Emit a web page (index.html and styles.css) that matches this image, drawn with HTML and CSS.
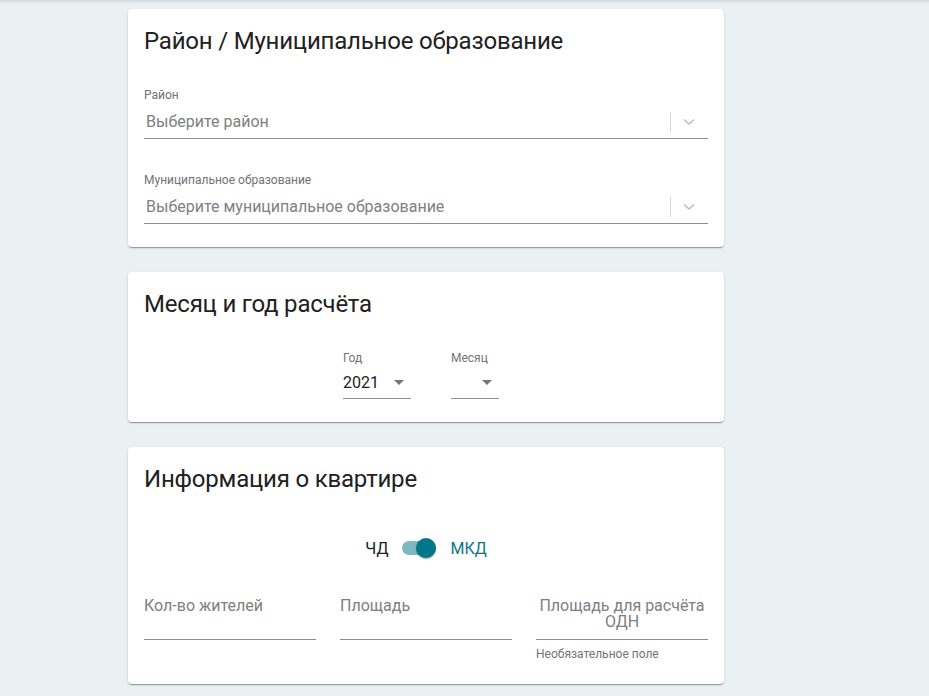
FILE: index.html
```html
<!DOCTYPE html>
<html lang="ru">
<head>
<meta charset="utf-8">
<link rel="stylesheet" href="styles.css">
</head>
<body>
<div class="topshade"></div>
<main class="page">
  <section class="card">
    <h2 class="card-title">Район / Муниципальное образование</h2>
    <div class="sel-field first">
      <div class="sel-label">Район</div>
      <div class="sel-box">
        <span class="sel-placeholder">Выберите район</span>
        <span class="sel-sep"></span>
        <svg class="sel-chev" viewBox="0 0 12 8" width="12" height="8"><path d="M1 1.5 L6 6 L11 1.5" fill="none" stroke="#bdbdbd" stroke-width="1.6"/></svg>
      </div>
    </div>
    <div class="sel-field second">
      <div class="sel-label">Муниципальное образование</div>
      <div class="sel-box">
        <span class="sel-placeholder">Выберите муниципальное образование</span>
        <span class="sel-sep"></span>
        <svg class="sel-chev" viewBox="0 0 12 8" width="12" height="8"><path d="M1 1.5 L6 6 L11 1.5" fill="none" stroke="#bdbdbd" stroke-width="1.6"/></svg>
      </div>
    </div>
  </section>

  <section class="card">
    <h2 class="card-title">Месяц и год расчёта</h2>
    <div class="date-row">
      <div class="mat-select year">
        <div class="ms-label">Год</div>
        <div class="ms-box"><span class="ms-value">2021</span><span class="ms-arrow"></span></div>
      </div>
      <div class="mat-select month">
        <div class="ms-label">Месяц</div>
        <div class="ms-box"><span class="ms-value"></span><span class="ms-arrow"></span></div>
      </div>
    </div>
  </section>

  <section class="card">
    <h2 class="card-title">Информация о квартире</h2>
    <div class="toggle-row">
      <span class="tg-text">ЧД</span>
      <span class="toggle"><span class="tg-track"></span><span class="tg-thumb"></span></span>
      <span class="tg-text active">МКД</span>
    </div>
    <div class="inputs">
      <div class="in-field">
        <div class="in-box"><span class="in-ph">Кол-во жителей</span></div>
      </div>
      <div class="in-field">
        <div class="in-box"><span class="in-ph">Площадь</span></div>
      </div>
      <div class="in-field">
        <div class="in-box"><span class="in-ph center">Площадь для расчёта ОДН</span></div>
        <div class="in-hint">Необязательное поле</div>
      </div>
    </div>
  </section>
</main>
</body>
</html>
```

FILE: styles.css
```css
* { box-sizing: border-box; }
html, body { margin: 0; padding: 0; }
body {
  background: #e9f1f2;
  font-family: Roboto, "Liberation Sans", Arial, sans-serif;
  width: 929px;
  height: 696px;
  overflow: hidden;
  position: relative;
}
.topshade {
  position: absolute;
  left: 0; right: 0; top: 0;
  height: 4px;
  background: linear-gradient(#d3d9da, #e9f1f2);
}
.page {
  width: 596px;
  margin-left: 128px;
  padding-top: 9px;
  display: flex;
  flex-direction: column;
  gap: 25px;
}
.card {
  background: #fff;
  border-radius: 4px;
  box-shadow: 0 2px 1px -1px rgba(0,0,0,.2), 0 1px 1px 0 rgba(0,0,0,.14), 0 1px 3px 0 rgba(0,0,0,.12);
  padding: 16px;
}
.card-title {
  margin: 0;
  font-size: 24px;
  line-height: 32px;
  font-weight: 400;
  color: #212121;
  letter-spacing: -0.2px;
}

/* ng-select like fields */
.sel-field { position: relative; }
.sel-field.first { margin-top: 31px; }
.sel-field.second { margin-top: 34px; margin-bottom: 7px; }
.sel-label {
  font-size: 12px;
  line-height: 14px;
  color: #737373;
}
.sel-box {
  display: flex;
  align-items: center;
  height: 32px;
  margin-top: 5px;
  border-bottom: 1px solid #8f8f8f;
  padding-left: 2px;
}
.sel-placeholder {
  flex: 1;
  font-size: 16px;
  color: #808080;
  padding-bottom: 2px;
}
.sel-sep {
  width: 1px;
  height: 20px;
  background: #d6d6d6;
  margin-right: 12px;
  margin-bottom: 2px;
}
.sel-chev { margin-right: 13px; margin-bottom: 1px; }

/* date row */
.date-row {
  display: flex;
  justify-content: center;
  gap: 40px;
  margin-top: 31px;
  padding-right: 10px;
  padding-bottom: 7px;
}
.mat-select { display: flex; flex-direction: column; }
.mat-select.year { width: 68px; }
.mat-select.month { width: 48px; }
.ms-label {
  font-size: 12px;
  line-height: 14px;
  color: #737373;
}
.ms-box {
  display: flex;
  align-items: center;
  height: 30px;
  margin-top: 4px;
  border-bottom: 1px solid #8f8f8f;
  padding-bottom: 3px;
}
.ms-value {
  flex: 1;
  font-size: 16px;
  color: #212121;
}
.ms-arrow {
  width: 0; height: 0;
  border-left: 5px solid transparent;
  border-right: 5px solid transparent;
  border-top: 5px solid #757575;
  margin-right: 7px;
}

/* toggle */
.toggle-row {
  display: flex;
  justify-content: center;
  align-items: center;
  gap: 14px;
  margin-top: 40px;
  height: 26px;
}
.tg-text { font-size: 16px; color: #212121; }
.tg-text.active { color: #0e7486; }
.toggle {
  position: relative;
  width: 34px;
  height: 20px;
  display: inline-block;
}
.tg-track {
  position: absolute;
  left: 0; top: 3px;
  width: 34px; height: 14px;
  border-radius: 7px;
  background: #80b8c2;
}
.tg-thumb {
  position: absolute;
  right: 0; top: 0;
  width: 20px; height: 20px;
  border-radius: 50%;
  background: #00788a;
  box-shadow: 0 2px 1px -1px rgba(0,0,0,.2), 0 1px 1px 0 rgba(0,0,0,.14), 0 1px 3px 0 rgba(0,0,0,.12);
}

/* inputs */
.inputs {
  display: grid;
  grid-template-columns: repeat(3, 1fr);
  gap: 24px;
  margin-top: 37px;
  padding-bottom: 7px;
}
.in-box {
  height: 42px;
  border-bottom: 1px solid #8f8f8f;
  display: flex;
  align-items: flex-start;
}
.in-ph {
  font-size: 16px;
  line-height: 16px;
  color: #808080;
  width: 100%;
}
.in-ph.center { text-align: center; }
.in-hint {
  font-size: 12px;
  line-height: 14px;
  color: #737373;
  margin-top: 7px;
}
```
